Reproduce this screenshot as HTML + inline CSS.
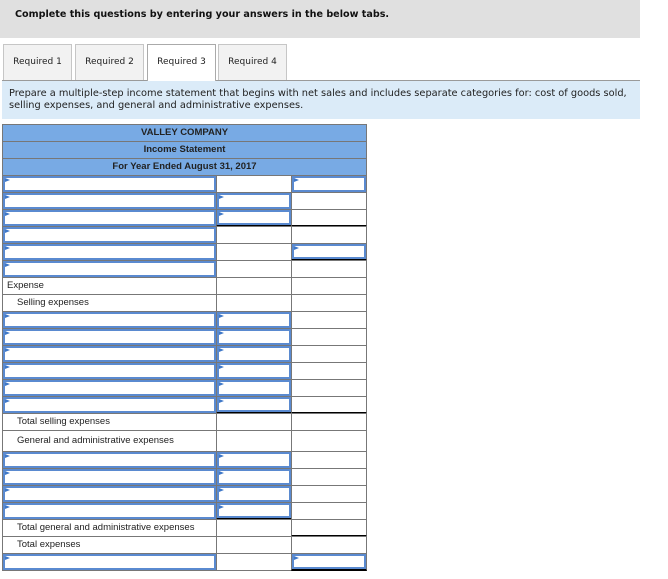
<!DOCTYPE html>
<html><head><meta charset="utf-8"><style>
body{margin:0;width:668px;height:579px;background:#fff;position:relative;overflow:hidden;font-family:"Liberation Sans",Arial,sans-serif}
.top{position:absolute;left:0;top:0;width:640px;height:38px;background:#e0e0e0}
.top span{position:absolute;left:15px;top:9px;font:bold 9.6px "DejaVu Sans",Verdana,sans-serif;color:#111}
.tab{position:absolute;top:44px;height:36px;width:69px;box-sizing:border-box;border:1px solid #c6c6c6;border-bottom:none;background:#f2f2f2;font:9px "DejaVu Sans",Verdana,sans-serif;color:#222;text-align:center;line-height:35px}
.tab.on{background:#fff;border-color:#aaa;height:37px;z-index:2}
.ins{position:absolute;left:2px;top:80px;width:638px;height:39px;background:#dbebf8;border-top:1px solid #9a9a9a;box-sizing:border-box;font:9.8px "DejaVu Sans",Verdana,sans-serif;color:#222;padding:7px 0 0 7px;line-height:11.5px;white-space:nowrap}
.h{position:absolute;left:2px;width:365px;height:18px;box-sizing:border-box;background:#78aae4;border:1px solid #777;text-align:center;font-size:9.5px;font-weight:bold;color:#222;line-height:16px}
.r{position:absolute;left:0;height:18px;width:370px}
.r>div{position:absolute;top:0;height:100%;box-sizing:border-box;border:1px solid #777;font-size:9.5px;color:#222;line-height:16px}
.a{left:2px;width:215px;padding-left:4px}
.b{left:216px;width:76px}
.c{left:291px;width:76px}
.in{padding-left:14px}
.i::after{content:"";position:absolute;left:0;top:0;right:0;bottom:0;border:2px solid #5a8ad0}
.i::before{content:"";position:absolute;left:2px;top:2px;border-left:5px solid #3f78c8;border-top:2.5px solid transparent;border-bottom:2.5px solid transparent;z-index:2}
.k{border-bottom:2px solid #000!important}
</style></head><body>
<div class="top"><span>Complete this questions by entering your answers in the below tabs.</span></div>
<div class="tab" style="left:3px">Required 1</div>
<div class="tab" style="left:75px">Required 2</div>
<div class="tab on" style="left:147px">Required 3</div>
<div class="tab" style="left:218px">Required 4</div>
<div class="ins">Prepare a multiple-step income statement that begins with net sales and includes separate categories for: cost of goods sold,<br>selling expenses, and general and administrative expenses.</div>
<div class="h" style="top:124px">VALLEY COMPANY</div>
<div class="h" style="top:141px">Income Statement</div>
<div class="h" style="top:158px">For Year Ended August 31, 2017</div>

<div class="r" style="top:175px"><div class="a i"></div><div class="b"></div><div class="c i"></div></div>
<div class="r" style="top:192px"><div class="a i"></div><div class="b i"></div><div class="c"></div></div>
<div class="r" style="top:209px"><div class="a i"></div><div class="b i k"></div><div class="c k"></div></div>
<div class="r" style="top:226px"><div class="a i"></div><div class="b"></div><div class="c"></div></div>
<div class="r" style="top:243px"><div class="a i"></div><div class="b"></div><div class="c i k"></div></div>
<div class="r" style="top:260px"><div class="a i"></div><div class="b"></div><div class="c"></div></div>
<div class="r" style="top:277px"><div class="a">Expense</div><div class="b"></div><div class="c"></div></div>
<div class="r" style="top:294px"><div class="a in">Selling expenses</div><div class="b"></div><div class="c"></div></div>
<div class="r" style="top:311px"><div class="a i"></div><div class="b i"></div><div class="c"></div></div>
<div class="r" style="top:328px"><div class="a i"></div><div class="b i"></div><div class="c"></div></div>
<div class="r" style="top:345px"><div class="a i"></div><div class="b i"></div><div class="c"></div></div>
<div class="r" style="top:362px"><div class="a i"></div><div class="b i"></div><div class="c"></div></div>
<div class="r" style="top:379px"><div class="a i"></div><div class="b i"></div><div class="c"></div></div>
<div class="r" style="top:396px"><div class="a i"></div><div class="b i k"></div><div class="c k"></div></div>
<div class="r" style="top:413px"><div class="a in">Total selling expenses</div><div class="b"></div><div class="c"></div></div>
<div class="r" style="top:430px;height:22px"><div class="a in" style="line-height:20px">General and administrative expenses</div><div class="b"></div><div class="c"></div></div>
<div class="r" style="top:451px"><div class="a i"></div><div class="b i"></div><div class="c"></div></div>
<div class="r" style="top:468px"><div class="a i"></div><div class="b i"></div><div class="c"></div></div>
<div class="r" style="top:485px"><div class="a i"></div><div class="b i"></div><div class="c"></div></div>
<div class="r" style="top:502px"><div class="a i"></div><div class="b i k"></div><div class="c"></div></div>
<div class="r" style="top:519px"><div class="a in">Total general and administrative expenses</div><div class="b"></div><div class="c k"></div></div>
<div class="r" style="top:536px"><div class="a in">Total expenses</div><div class="b"></div><div class="c"></div></div>
<div class="r" style="top:553px"><div class="a i"></div><div class="b"></div><div class="c i k"></div></div>
</body></html>
